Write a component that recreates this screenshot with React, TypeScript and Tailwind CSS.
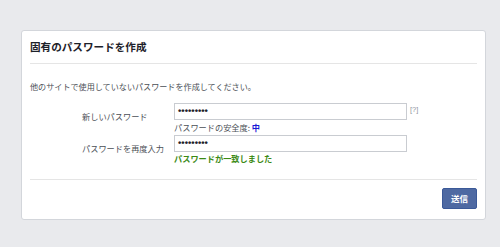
export default function App() {
  return (
    <div
      className="h-[247px] w-[500px] bg-[#e9eaed] pl-[21px] pt-[30px]"
      style={{ fontFamily: '"Noto Sans CJK JP", "Liberation Sans", sans-serif' }}
    >
      <div className="h-[190px] w-[465px] rounded-[3px] border border-[#d3d6db] bg-white px-[8px]">
        {/* header */}
        <div className="flex h-[33px] items-center border-b border-[#e5e5e5]">
          <h1 className="pt-[1px] text-[10.6px] font-bold leading-none text-[#1d2129]">
            固有のパスワードを作成
          </h1>
        </div>

        {/* body */}
        <p className="mt-[18px] text-[8.1px] leading-[10px] text-[#4b4f56]">
          他のサイトで使用していないパスワードを作成してください。
        </p>

        <div className="mt-[11px] flex flex-col gap-[3px]">
          <div className="flex">
            <label className="w-[144px] pl-[52px] pt-[8px] text-[8.2px] leading-[10px] text-[#4b4f56]">
              新しいパスワード
            </label>
            <div className="flex flex-col">
              <div className="flex items-start">
                <div className="flex h-[17px] w-[233px] items-center border border-[#c9ccd1] px-[3px] font-['Liberation_Sans',sans-serif] text-[9.5px] font-bold text-[#1d2129]">
                  •••••••••
                </div>
                <span className="ml-[3px] mt-[3px] font-['Liberation_Sans',sans-serif] text-[7.5px] leading-none text-[#8d949e]">
                  [?]
                </span>
              </div>
              <div className="mt-[2px] text-[8.2px] leading-[10px] text-[#4b4f56]">
                パスワードの安全度: <span className="font-bold text-[#1a1ad6]">中</span>
              </div>
            </div>
          </div>

          <div className="flex">
            <label className="w-[144px] pl-[52px] pt-[8px] text-[8.2px] leading-[10px] text-[#4b4f56]">
              パスワードを再度入力
            </label>
            <div className="flex flex-col">
              <div className="flex h-[17px] w-[233px] items-center border border-[#c9ccd1] px-[3px] font-['Liberation_Sans',sans-serif] text-[9.5px] font-bold text-[#1d2129]">
                •••••••••
              </div>
              <div className="mt-[1px] text-[8.2px] font-bold leading-[10px] text-[#3b8a15]">
                パスワードが一致しました
              </div>
            </div>
          </div>
        </div>

        {/* footer */}
        <div className="mt-[16px] flex justify-end border-t border-[#e5e5e5] pt-[8px]">
          <button className="h-[21px] w-[35px] rounded-[2px] border border-[#3b5998] bg-[#4e69a2] text-[8.5px] font-bold text-white">
            送信
          </button>
        </div>
      </div>
    </div>
  );
}
